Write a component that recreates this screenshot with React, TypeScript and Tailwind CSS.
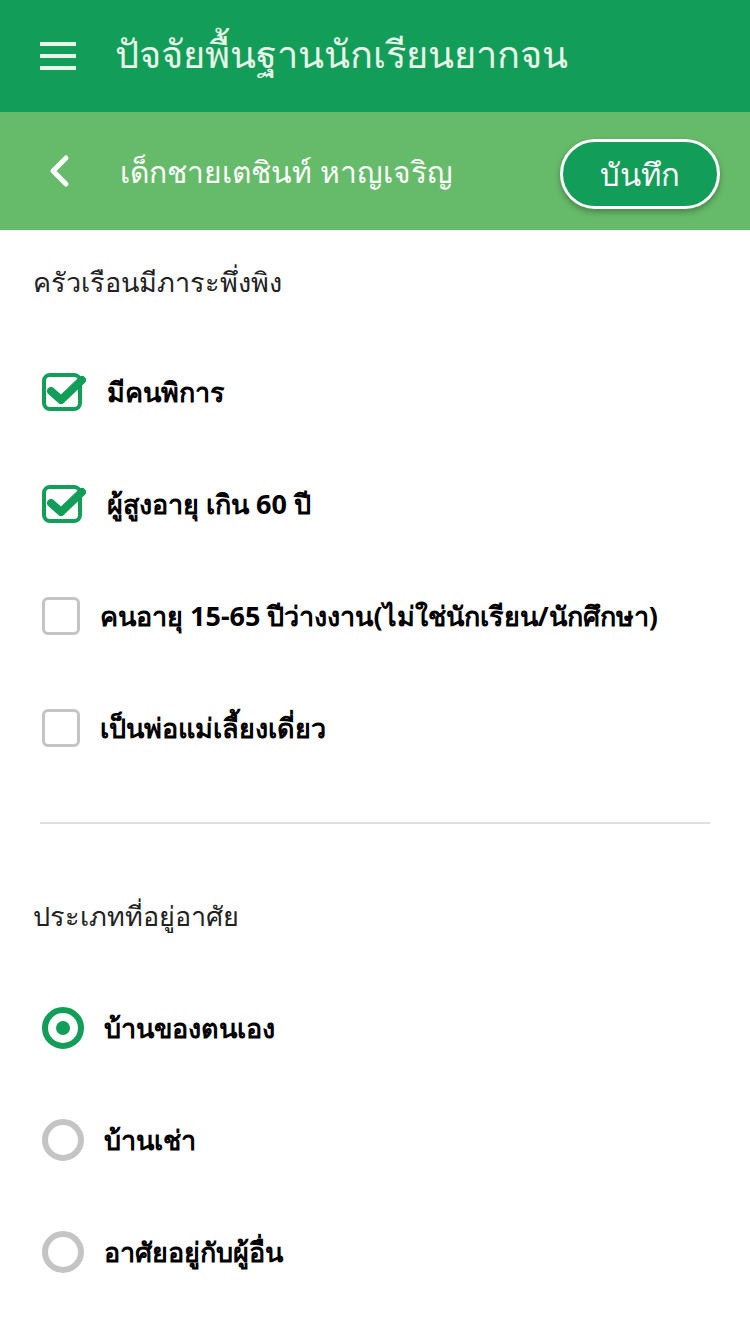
import { useState } from "react";

const checkItems = [
  "มีคนพิการ",
  "ผู้สูงอายุ เกิน 60 ปี",
  "คนอายุ 15-65 ปีว่างงาน(ไม่ใช่นักเรียน/นักศึกษา)",
  "เป็นพ่อแม่เลี้ยงเดี่ยว",
];

const radioItems = ["บ้านของตนเอง", "บ้านเช่า", "อาศัยอยู่กับผู้อื่น"];

function CheckedBox() {
  return (
    <svg width="46" height="40" viewBox="0 0 46 40" className="shrink-0">
      <rect x="2" y="3" width="36" height="34" rx="6" fill="none" stroke="#129e58" strokeWidth="4" />
      <path d="M9 19 L19 28 L40 8" fill="none" stroke="#129e58" strokeWidth="8" strokeLinecap="round" strokeLinejoin="round" />
    </svg>
  );
}

function EmptyBox() {
  return <div className="w-[38px] h-[38px] rounded-[6px] border-[3px] border-[#c4c4c4] shrink-0" />;
}

export default function App() {
  const [checked, setChecked] = useState([true, true, false, false]);
  const [home, setHome] = useState(0);

  const toggle = (i: number) => {
    const next = [...checked];
    next[i] = !next[i];
    setChecked(next);
  };

  return (
    <div className="w-[750px] min-h-[1334px] bg-white font-['Noto_Sans','Liberation_Sans',sans-serif]">
      {/* Top app bar */}
      <div className="h-[112px] bg-[#129e58] flex items-center pl-[40px]">
        <div className="flex flex-col gap-[8px] w-[36px]">
          <div className="h-[4px] bg-[#e8f5e9]" />
          <div className="h-[4px] bg-[#e8f5e9]" />
          <div className="h-[4px] bg-[#e8f5e9]" />
        </div>
        <div className="ml-[39px] text-[38px] leading-[44px] pb-[6px] text-[#e8f5e9]">ปัจจัยพื้นฐานนักเรียนยากจน</div>
      </div>

      {/* Sub bar */}
      <div className="h-[118px] bg-[#66bb6a] flex items-center pl-[46px] pr-[30px]">
        <svg width="26" height="34" viewBox="0 0 26 34">
          <path d="M20 4 L7 17 L20 30" fill="none" stroke="white" strokeWidth="5" strokeLinecap="round" strokeLinejoin="round" />
        </svg>
        <div className="ml-[48px] text-[30px] text-white flex-1">เด็กชายเตชินท์ หาญเจริญ</div>
        <button className="w-[160px] h-[70px] mt-[6px] rounded-full bg-[#129e58] border-[3px] border-white text-white text-[31px] shadow-[0_3px_6px_rgba(0,0,0,0.3)]">
          บันทึก
        </button>
      </div>

      {/* Dependants section */}
      <div className="px-[33px] pt-[34px]">
        <div className="text-[27px] text-[#222] leading-[36px]">ครัวเรือนมีภาระพึ่งพิง</div>
        <div className="mt-[36px] flex flex-col">
          {checkItems.map((label, i) => (
            <div key={label} className="h-[112px] flex items-center pl-[9px] cursor-pointer" onClick={() => toggle(i)}>
              {checked[i] ? <CheckedBox /> : <EmptyBox />}
              <span className={`text-[27px] font-bold text-black ${checked[i] ? "ml-[19px]" : "ml-[20px]"}`}>{label}</span>
            </div>
          ))}
        </div>
      </div>

      <div className="mx-[40px] mt-[38px] h-[2px] bg-[#e0e0e0]" />

      {/* Housing section */}
      <div className="px-[33px] pt-[74px]">
        <div className="text-[27px] text-[#222] leading-[36px]">ประเภทที่อยู่อาศัย</div>
        <div className="mt-[38px] flex flex-col">
          {radioItems.map((label, i) => (
            <div key={label} className="h-[112px] flex items-center pl-[9px] cursor-pointer" onClick={() => setHome(i)}>
              <div
                className={`w-[42px] h-[42px] rounded-full border-[6px] flex items-center justify-center shrink-0 ${
                  home === i ? "border-[#129e58]" : "border-[#c4c4c4]"
                }`}
              >
                {home === i && <div className="w-[14px] h-[14px] rounded-full bg-[#129e58]" />}
              </div>
              <span className="ml-[20px] text-[27px] font-bold text-black">{label}</span>
            </div>
          ))}
        </div>
      </div>
    </div>
  );
}
